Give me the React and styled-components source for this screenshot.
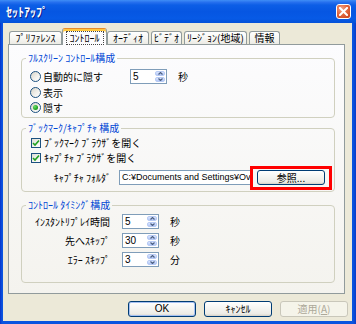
import React from "react";
import styled, { createGlobalStyle } from "styled-components";

const JP = `"Noto Sans CJK JP", "Noto Sans", sans-serif`;
const LATIN = `"Liberation Sans", "Noto Sans CJK JP", sans-serif`;

const GlobalStyle = createGlobalStyle`
  html, body { margin: 0; padding: 0; background: #ffffff; }
  #root { width: 356px; height: 324px; }
  *, *::before, *::after { box-sizing: border-box; }
`;

const Window = styled.div`
  width: 356px;
  height: 324px;
  display: flex;
  flex-direction: column;
  background: linear-gradient(90deg, #0832C8 0px, #0A54E0 2px, #0A54E0 calc(100% - 3px), #0A3CC8 100%);
  font-family: ${JP};
  font-size: 10px;
  color: #000;
  overflow: hidden;
`;

const TitleBar = styled.div`
  flex: none;
  height: 23px;
  display: flex;
  align-items: center;
  justify-content: space-between;
  padding: 0 5px 0 6px;
  background: linear-gradient(180deg, #3F8EF6 0%, #2670EE 10%, #0C5EE6 22%, #0656E2 50%, #075AE6 80%, #0552D8 100%);
`;

const Title = styled.span`
  color: #ffffff;
  font-weight: bold;
  font-size: 12px;
  line-height: 14px;
  text-shadow: 1px 1px 0 #0A1E8C;
`;

const CloseButton = styled.div`
  width: 15px;
  height: 15px;
  border: 1px solid #ffffff;
  border-radius: 3px;
  background: radial-gradient(circle at 35% 30%, #F2A58A 0%, #E2683F 45%, #C53D18 100%);
  display: flex;
  align-items: center;
  justify-content: center;
`;

const Body = styled.div`
  flex: 1;
  display: flex;
  flex-direction: column;
  margin: 0 4px 3px 3px;
  background: #ECE9D8;
  padding: 5px 7px 4px 5px;
`;

const TabStrip = styled.div`
  flex: none;
  height: 17px;
  margin-bottom: -1px;
  display: flex;
  align-items: flex-end;
  gap: 2px;
  padding-left: 1px;
  position: relative;
  z-index: 1;
`;

const Tab = styled.div`
  width: ${(p) => p.$w}px;
  height: ${(p) => (p.$active ? 17 : 13)}px;
  margin: 0 ${(p) => (p.$active ? -2 : 0)}px ${(p) => (p.$active ? 0 : 1)}px;
  border: 1px solid #919B9C;
  border-bottom: none;
  border-top-color: ${(p) => (p.$active ? "#E68B2C" : "#919B9C")};
  border-radius: 3px 3px 0 0;
  background: ${(p) =>
    p.$active
      ? "#FCFCFE"
      : "linear-gradient(180deg, #FFFFFF 0%, #F7F7F4 50%, #ECEBE5 100%)"};
  box-shadow: ${(p) => (p.$active ? "inset 0 2px 0 #FFC73C" : "none")};
  display: flex;
  align-items: center;
  justify-content: center;
  padding-top: ${(p) => (p.$active ? 2 : 0)}px;
  font-size: 10px;
  line-height: 12px;
  white-space: nowrap;
`;

const FocusText = styled.span`
  outline: 1px dotted #444;
  outline-offset: 0;
  padding: 0 3px;
`;

const Panel = styled.div`
  flex: 1;
  border: 1px solid #919B9C;
  background: linear-gradient(180deg, #FCFCFE 0%, #F4F3EE 100%);
  padding: 7px 9px 0 12px;
  display: flex;
  flex-direction: column;
`;

const Group = styled.fieldset`
  margin: ${(p) => p.$mt}px 0 0 0;
  padding: 0;
  border: 1px solid #D0D0BF;
  border-radius: 4px;
  min-width: 0;
`;

const Legend = styled.legend`
  margin-left: 4px;
  padding: 0 2px;
  color: #0046D5;
  font-size: 10px;
  line-height: 12px;
  white-space: nowrap;
`;

const FullscreenGrid = styled.div`
  display: grid;
  grid-template-columns: 100px 37px auto;
  grid-template-rows: 17px 15px 15px;
  align-items: center;
  padding: 4px 0 2px 8px;
`;

const TimingGrid = styled.div`
  display: grid;
  grid-template-columns: 88px 37px auto;
  grid-auto-rows: 15px;
  row-gap: 4px;
  column-gap: 12px;
  align-items: center;
  padding: 3px 0 15px 0;
`;

const Rows = styled.div`
  display: flex;
  flex-direction: column;
  padding: 1px 0 1px 8px;
`;

const OptionRow = styled.label`
  display: flex;
  align-items: center;
  height: 15px;
  gap: ${(p) => p.$gap}px;
  font-size: 10px;
  line-height: 12px;
  white-space: nowrap;
`;

const RadioCircle = styled.span`
  flex: none;
  width: 11px;
  height: 11px;
  border-radius: 50%;
  border: 1px solid #1C5180;
  background: linear-gradient(135deg, #D6D3C8 0%, #F1F0EB 55%, #FFFFFF 100%);
  display: flex;
  align-items: center;
  justify-content: center;
  &::after {
    content: "";
    display: ${(p) => (p.$checked ? "block" : "none")};
    width: 5px;
    height: 5px;
    border-radius: 50%;
    background: radial-gradient(circle at 35% 35%, #6BE06B 0%, #22A322 60%, #187818 100%);
  }
`;

const CheckBox = styled.span`
  flex: none;
  width: 10px;
  height: 10px;
  margin-left: 1px;
  border: 1px solid #1C5180;
  background: linear-gradient(135deg, #DCDCD5 0%, #F4F3EE 55%, #FFFFFF 100%);
  display: flex;
  align-items: center;
  justify-content: center;
`;

const Unit = styled.span`
  margin-left: ${(p) => p.$ml}px;
  font-size: 10px;
  line-height: 12px;
`;

const FieldLabel = styled.span`
  text-align: right;
  font-size: 10px;
  line-height: 12px;
  white-space: nowrap;
`;

const SpinBox = styled.div`
  width: 37px;
  height: 15px;
  border: 1px solid #7F9DB9;
  background: #ffffff;
  display: flex;
`;

const SpinValue = styled.span`
  flex: 1;
  padding-left: 2px;
  font-family: ${LATIN};
  font-size: 10px;
  line-height: 13px;
`;

const SpinButtons = styled.div`
  width: 11px;
  display: flex;
  flex-direction: column;
  gap: 1px;
  padding: 1px 1px 1px 0;
`;

const SpinButton = styled.div`
  flex: 1;
  border-radius: 2px;
  background: linear-gradient(180deg, #DCE6FD 0%, #C3D4FA 60%, #B2C6F4 100%);
  border: 1px solid #B7CAF5;
  display: flex;
  align-items: center;
  justify-content: center;
`;

const FolderRow = styled.div`
  display: flex;
  align-items: center;
  height: 25px;
`;

const FolderLabel = styled.span`
  width: 81px;
  margin-right: 8px;
  text-align: right;
  font-size: 10px;
  line-height: 12px;
  white-space: nowrap;
`;

const PathInput = styled.div`
  width: 134px;
  height: 15px;
  border: 1px solid #7F9DB9;
  background: #ffffff;
  padding-left: 2px;
  overflow: hidden;
  white-space: nowrap;
  font-family: ${LATIN};
  font-size: 9px;
  line-height: 13px;
`;

const ButtonWrap = styled.div`
  position: relative;
  margin-left: ${(p) => p.$ml}px;
  display: flex;
`;

const Highlight = styled.div`
  position: absolute;
  left: -7px;
  right: -7px;
  top: -4px;
  bottom: -5px;
  border: 3px solid #FF0000;
  pointer-events: none;
`;

const Button = styled.button`
  width: 68px;
  height: ${(p) => p.$h}px;
  padding: 0;
  border: 1px solid ${(p) => (p.disabled ? "#C9C7BA" : "#003C74")};
  border-radius: 3px;
  background: ${(p) =>
    p.disabled
      ? "#F5F4EA"
      : "linear-gradient(180deg, #FFFFFF 0%, #F6F6F3 40%, #ECEBE6 85%, #D6D0C5 100%)"};
  box-shadow: ${(p) => (p.$default ? "inset 0 0 0 1px #A6C1F2" : "none")};
  color: ${(p) => (p.disabled ? "#ACA899" : "#000000")};
  font-family: ${(p) => (p.$latin ? LATIN : JP)};
  font-size: 10px;
  line-height: 12px;
  white-space: nowrap;
`;

const ButtonRow = styled.div`
  flex: none;
  display: flex;
  justify-content: flex-end;
  gap: 8px;
  margin: 7px -3px 0 0;
`;

const CloseIcon = () => (
  <svg width="9" height="9" viewBox="0 0 9 9">
    <path d="M1 1L8 8M8 1L1 8" stroke="#fff" strokeWidth="2" strokeLinecap="square" />
  </svg>
);

const Arrow = ({ up }) => (
  <svg width="5" height="3" viewBox="0 0 5 3">
    <polyline
      points={up ? "0.5,2.5 2.5,0.5 4.5,2.5" : "0.5,0.5 2.5,2.5 4.5,0.5"}
      fill="none"
      stroke="#4D6185"
      strokeWidth="1.2"
    />
  </svg>
);

const Spinner = ({ value }) => (
  <SpinBox>
    <SpinValue>{value}</SpinValue>
    <SpinButtons>
      <SpinButton>
        <Arrow up />
      </SpinButton>
      <SpinButton>
        <Arrow />
      </SpinButton>
    </SpinButtons>
  </SpinBox>
);

const Radio = ({ label, checked }) => (
  <OptionRow $gap={2}>
    <RadioCircle $checked={checked} />
    {label}
  </OptionRow>
);

const Check = ({ label }) => (
  <OptionRow $gap={3}>
    <CheckBox>
      <svg width="8" height="8" viewBox="0 0 8 8">
        <path d="M1 4L3 6L7 1.5" fill="none" stroke="#21A121" strokeWidth="1.6" />
      </svg>
    </CheckBox>
    {label}
  </OptionRow>
);

const tabs = [
  { label: "ﾌﾟﾘﾌｧﾚﾝｽ", w: 53 },
  { label: "ｺﾝﾄﾛｰﾙ", w: 45, active: true },
  { label: "ｵｰﾃﾞｨｵ", w: 42 },
  { label: "ﾋﾞﾃﾞｵ", w: 31 },
  { label: "ﾘｰｼﾞｮﾝ(地域)", w: 63 },
  { label: "情報", w: 31 },
];

const timings = [
  { label: "ｲﾝｽﾀﾝﾄﾘﾌﾟﾚｲ時間", value: "5", unit: "秒" },
  { label: "先へｽｷｯﾌﾟ", value: "30", unit: "秒" },
  { label: "ｴﾗｰ ｽｷｯﾌﾟ", value: "3", unit: "分" },
];

export default function App() {
  return (
    <>
      <GlobalStyle />
      <Window>
        <TitleBar>
          <Title>ｾｯﾄｱｯﾌﾟ</Title>
          <CloseButton>
            <CloseIcon />
          </CloseButton>
        </TitleBar>
        <Body>
          <TabStrip>
            {tabs.map((t) => (
              <Tab key={t.label} $w={t.w} $active={t.active}>
                {t.active ? <FocusText>{t.label}</FocusText> : t.label}
              </Tab>
            ))}
          </TabStrip>
          <Panel>
            <Group $mt={0}>
              <Legend>ﾌﾙｽｸﾘｰﾝ ｺﾝﾄﾛｰﾙ構成</Legend>
              <FullscreenGrid>
                <Radio label="自動的に隠す" />
                <Spinner value="5" />
                <Unit $ml={11}>秒</Unit>
                <Radio label="表示" />
                <span />
                <span />
                <Radio label="隠す" checked />
              </FullscreenGrid>
            </Group>
            <Group $mt={4}>
              <Legend>ﾌﾞｯｸﾏｰｸ/ｷｬﾌﾟﾁｬ 構成</Legend>
              <Rows>
                <Check label="ﾌﾞｯｸﾏｰｸ ﾌﾞﾗｳｻﾞを開く" />
                <Check label="ｷｬﾌﾟﾁｬ ﾌﾞﾗｳｻﾞを開く" />
                <FolderRow>
                  <FolderLabel>ｷｬﾌﾟﾁｬ ﾌｫﾙﾀﾞ</FolderLabel>
                  <PathInput>C:¥Documents and Settings¥Ov</PathInput>
                  <ButtonWrap $ml={4}>
                    <Button $h={15}>参照...</Button>
                    <Highlight />
                  </ButtonWrap>
                </FolderRow>
              </Rows>
            </Group>
            <Group $mt={7}>
              <Legend>ｺﾝﾄﾛｰﾙ ﾀｲﾐﾝｸﾞ構成</Legend>
              <TimingGrid>
                {timings.map((t) => (
                  <React.Fragment key={t.label}>
                    <FieldLabel>{t.label}</FieldLabel>
                    <Spinner value={t.value} />
                    <Unit $ml={-1}>{t.unit}</Unit>
                  </React.Fragment>
                ))}
              </TimingGrid>
            </Group>
          </Panel>
          <ButtonRow>
            <Button $h={16} $default $latin>OK</Button>
            <Button $h={16}>ｷｬﾝｾﾙ</Button>
            <Button $h={16} disabled>
              適用(<u>A</u>)
            </Button>
          </ButtonRow>
        </Body>
      </Window>
    </>
  );
}
